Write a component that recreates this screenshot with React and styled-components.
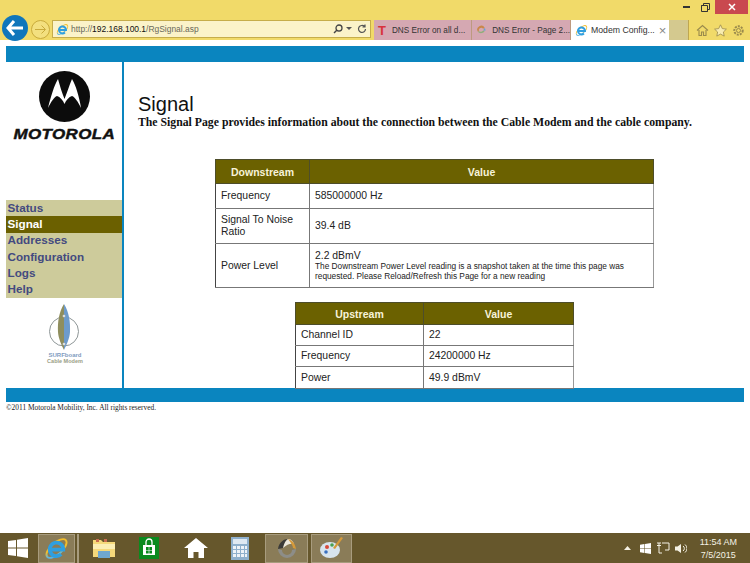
import React from "react";
import styled, { createGlobalStyle } from "styled-components";

const GlobalStyle = createGlobalStyle`
  html, body {
    margin: 0;
    padding: 0;
    background: #fff;
    font-family: "Liberation Sans", Arial, sans-serif;
  }
`;

const Screen = styled.div`
  width: 750px;
  height: 563px;
  display: flex;
  flex-direction: column;
  overflow: hidden;
  position: relative;
`;

/* browser chrome */
const Chrome = styled.div`
  height: 40px;
  flex: none;
  background: #f1da69;
  display: flex;
  flex-direction: column;
`;

const TitleRow = styled.div`
  height: 15px;
  flex: none;
  display: flex;
  justify-content: flex-end;
  align-items: flex-start;
  padding-right: 2px;
`;

const WinButton = styled.div`
  width: ${(p) => p.$w}px;
  height: 14px;
  display: flex;
  align-items: center;
  justify-content: center;
  background: ${(p) => (p.$close ? "#c9494f" : "transparent")};
`;

const NavRow = styled.div`
  height: 25px;
  flex: none;
  display: flex;
  align-items: flex-end;
  position: relative;
`;

const BackButton = styled.div`
  position: absolute;
  left: 2px;
  top: 0;
  width: 26px;
  height: 26px;
  border-radius: 50%;
  background: #0f76bb;
  display: flex;
  align-items: center;
  justify-content: center;
  z-index: 2;
`;

const ForwardButton = styled.div`
  position: absolute;
  left: 31px;
  top: 5px;
  width: 17px;
  height: 17px;
  border-radius: 50%;
  border: 1px solid #c9ab3c;
  background: #f3e07f;
  display: flex;
  align-items: center;
  justify-content: center;
`;

const AddressBar = styled.div`
  margin-left: 52px;
  margin-bottom: 2px;
  width: 319px;
  height: 18px;
  box-sizing: border-box;
  background: #fbf3c9;
  border: 1px solid #c6ad4a;
  display: flex;
  align-items: center;
  padding: 0 3px 0 3px;
  gap: 4px;
  font-size: 8.45px;
  color: #6a6a5a;
`;

const Url = styled.span`
  flex: 1;
  margin-left: -2px;
  white-space: nowrap;
  b {
    font-weight: normal;
    color: #111;
  }
`;

const Tabs = styled.div`
  margin-left: 3px;
  height: 20px;
  display: flex;
  align-items: stretch;
`;

const Tab = styled.div`
  width: ${(p) => p.$w}px;
  box-sizing: border-box;
  background: ${(p) => (p.$active ? "#fff" : "#d5a8b2")};
  border-right: 1px solid ${(p) => (p.$active ? "#fff" : "#bd9a80")};
  display: flex;
  align-items: center;
  gap: ${(p) => p.$gap}px;
  padding-left: ${(p) => p.$pad}px;
  font-size: ${(p) => (p.$active ? 8.7 : 8.2)}px;
  color: #333;
  white-space: nowrap;
`;

const TabClose = styled.span`
  margin-left: 1px;
  color: #888;
  font-size: 13px;
  line-height: 13px;
`;

const NewTab = styled.div`
  width: 19px;
  background: #d4c98f;
  border-right: 1px solid #bfa750;
`;

const ChromeTools = styled.div`
  display: flex;
  gap: 5px;
  align-items: center;
  height: 20px;
  margin-left: 7px;
`;

/* page */
const Page = styled.div`
  flex: 1;
  min-height: 0;
  padding: 6px 6px 0;
  background: #fff;
`;

const BlueBar = styled.div`
  height: ${(p) => p.$h}px;
  background: #0a85bf;
`;

const Layout = styled.div`
  height: 326px;
  display: flex;
`;

const Sidebar = styled.div`
  width: 116px;
  flex: none;
  border-right: 2px solid #0a85bf;
  display: flex;
  flex-direction: column;
`;

const LogoBlock = styled.div`
  height: 138px;
  flex: none;
  display: flex;
  flex-direction: column;
  align-items: center;
  padding-top: 9px;
  box-sizing: border-box;
`;

const WordMark = styled.div`
  margin-top: 6px;
  font-size: 13.8px;
  line-height: 13px;
  font-weight: bold;
  font-style: italic;
  letter-spacing: 0.3px;
  color: #111;
  -webkit-text-stroke: 0.4px #111;
  transform: scaleX(1.23);
`;

const Menu = styled.div`
  background: #cdcb9b;
  display: flex;
  flex-direction: column;
  height: 98px;
  flex: none;
`;

const MenuItem = styled.div`
  flex: 1;
  display: flex;
  align-items: center;
  padding: 0 0 2px 1.5px;
  font-size: 11.7px;
  font-weight: bold;
  color: ${(p) => (p.$active ? "#fff" : "#434a80")};
  background: ${(p) => (p.$active ? "#6b6000" : "transparent")};
`;

const SurfLogo = styled.div`
  margin-top: 5px;
  display: flex;
  justify-content: center;
`;

const Content = styled.div`
  flex: 1;
  min-width: 0;
  display: flex;
  flex-direction: column;
  align-items: flex-start;
`;

const Heading = styled.div`
  margin: 31px 0 0 14px;
  font-size: 20px;
  line-height: 23px;
  color: #111;
`;

const Lead = styled.div`
  margin: 0 0 0 14px;
  font-family: "Liberation Serif", "Times New Roman", serif;
  font-size: 11.76px;
  line-height: 14px;
  font-weight: bold;
  color: #111;
  white-space: nowrap;
`;

const DataTable = styled.table`
  border-collapse: collapse;
  table-layout: fixed;
  width: ${(p) => p.$w}px;
  margin-left: ${(p) => p.$left}px;
  margin-top: ${(p) => p.$top}px;
  font-size: 10.4px;
  color: #222;
  background: #fff;

  th {
    background: #6b6100;
    color: #f7f3d8;
    font-weight: bold;
    font-size: 10.5px;
    text-align: center;
    border: 1px solid #4d4d2a;
    padding: 0;
  }

  td {
    border: 1px solid #777;
    border-left-color: #444;
    padding: 0 5px;
    line-height: 12px;
  }

  td:last-child {
    border-right-color: #999;
  }
`;

const Note = styled.div`
  font-size: 8.3px;
  line-height: 10px;
`;

const PowerValue = styled.div`
  font-size: 10.4px;
  line-height: 11px;
`;

const Copyright = styled.div`
  margin-top: 1px;
  font-family: "Liberation Serif", "Times New Roman", serif;
  font-size: 7.4px;
  line-height: 9px;
  color: #222;
`;

/* taskbar */
const Taskbar = styled.div`
  height: 30px;
  flex: none;
  background: #66572c;
  display: flex;
  align-items: center;
  color: #fff;
`;

const TaskSlot = styled.div`
  width: ${(p) => p.$w}px;
  margin-left: ${(p) => p.$ml || 0}px;
  height: 29px;
  box-sizing: border-box;
  display: flex;
  align-items: center;
  justify-content: center;
  background: ${(p) => (p.$on ? "#8a7c58" : "transparent")};
  border: 1px solid ${(p) => (p.$on ? "#a89c7e" : "transparent")};
`;

const TaskSeparator = styled.div`
  width: 2px;
  height: 29px;
  margin-left: 2px;
  background: #a89c7e;
`;

const Tray = styled.div`
  margin-left: auto;
  display: flex;
  align-items: center;
  gap: 6px;
  padding-right: 13px;
`;

const Clock = styled.div`
  margin-left: 7px;
  padding-top: 2px;
  text-align: center;
  font-size: 9px;
  line-height: 13px;
  color: #f4f1e4;
`;

const IeIcon = ({ size = 14 }) => (
  <svg width={size} height={size} viewBox="0 0 24 24">
    <defs>
      <linearGradient id="ieRing" x1="1" y1="0" x2="0" y2="1">
        <stop offset="0" stopColor="#f2bd2c" />
        <stop offset="0.55" stopColor="#f2bd2c" />
        <stop offset="0.8" stopColor="#58b6e6" />
        <stop offset="1" stopColor="#58b6e6" />
      </linearGradient>
    </defs>
    <ellipse cx="12" cy="12" rx="12" ry="5.500" transform="rotate(-42 12 12)" fill="none" stroke="url(#ieRing)" strokeWidth="1.800" />
    <path d="M6 13h12.500A6.500 6.500 0 1 0 16.500 17.500" fill="none" stroke="#2f9fe0" strokeWidth="3.600" />
  </svg>
);

const MotorolaMark = () => (
  <svg width="51" height="51" viewBox="0 0 51 51">
    <circle cx="25.500" cy="25.500" r="25.500" fill="#0c0c0c" />
    <path d="M9 37C12 25 15 15 19 8c2 7 4 14 6.500 20C28 22 30 15 33 8c4 7 7 17 9 29-3-6-6-11-9-12-3 1-6 4-7.500 8C24 29 21 26 18 25c-3 1-6 6-9 12z" fill="#fff" />
  </svg>
);

const SurfboardMark = () => (
  <svg width="60" height="62" viewBox="0 0 60 62">
    <circle cx="30" cy="28.500" r="14.500" fill="none" stroke="#8e9697" strokeWidth="1" />
    <path d="M30 1C25 9 23.500 19 24 29c.3 6 3.500 13 6 18z" fill="#8f8e5e" />
    <path d="M30 1c5 8 6.500 18 6 28-.3 6-3.500 13-6 18z" fill="#6d9bcc" />
    <circle cx="30" cy="13" r="1.300" fill="#fff" stroke="#8e9697" strokeWidth=".5" />
    <circle cx="30" cy="41" r="1.300" fill="#fff" stroke="#8e9697" strokeWidth=".5" />
    <text x="31" y="54" fontSize="6" textAnchor="middle" fill="#7f9cc0" fontWeight="bold" fontFamily="Liberation Sans">SURFboard</text>
    <text x="31" y="60" fontSize="5.500" textAnchor="middle" fill="#9a9e86" fontWeight="bold" fontFamily="Liberation Sans">Cable Modem</text>
  </svg>
);

const WinLogo = ({ size = 20, color = "#fff" }) => (
  <svg width={size} height={size} viewBox="0 0 20 20">
    <path d="M0 3l8-1.100V9.500H0zM9 1.700L20 0v9.500H9zM0 10.500h8v7.600L0 17zM9 10.500h11V20L9 18.300z" fill={color} />
  </svg>
);

const downstream = [
  { label: "Frequency", value: "585000000 Hz", h: 25 },
  { label: "Signal To Noise Ratio", value: "39.4 dB", h: 35 },
];

const upstream = [
  { label: "Channel ID", value: "22", h: 21 },
  { label: "Frequency", value: "24200000 Hz", h: 21 },
  { label: "Power", value: "49.9 dBmV", h: 22 },
];

const menu = ["Status", "Signal", "Addresses", "Configuration", "Logs", "Help"];

export default function App() {
  return (
    <Screen>
      <GlobalStyle />
      <Chrome>
        <TitleRow>
          <WinButton $w={18}>
            <svg width="7" height="2"><rect width="7" height="2" fill="#333" /></svg>
          </WinButton>
          <WinButton $w={20}>
            <svg width="9" height="9" viewBox="0 0 9 9">
              <path d="M2.500.5h6v6h-2v2h-6v-6h2zM.5 2.500h6v6" fill="none" stroke="#333" />
            </svg>
          </WinButton>
          <WinButton $w={33} $close>
            <svg width="8" height="8" viewBox="0 0 8 8">
              <path d="M1 1l6 6M7 1L1 7" stroke="#fff" strokeWidth="1.500" />
            </svg>
          </WinButton>
        </TitleRow>
        <NavRow>
          <BackButton>
            <svg width="18" height="16" viewBox="0 0 18 16">
              <path d="M8 1L2 8l6 7M2 8h15" fill="none" stroke="#fff" strokeWidth="3" />
            </svg>
          </BackButton>
          <ForwardButton>
            <svg width="11" height="9" viewBox="0 0 11 9">
              <path d="M6.500.5l4 4-4 4M10 4.500H0" fill="none" stroke="#c9ab3c" />
            </svg>
          </ForwardButton>
          <AddressBar>
            <IeIcon size={13} />
            <Url>
              http://<b>192.168.100.1</b>/RgSignal.asp
            </Url>
            <svg width="10" height="10" viewBox="0 0 10 10" style={{ marginRight: -1 }}>
              <circle cx="6" cy="4" r="3" fill="none" stroke="#444" strokeWidth="1.300" />
              <path d="M4 6L1 9" stroke="#444" strokeWidth="1.500" />
            </svg>
            <svg width="6" height="4"><path d="M0 0h6L3 3z" fill="#555" /></svg>
            <svg width="10" height="10" viewBox="0 0 10 10" style={{ marginLeft: 1 }}>
              <path d="M8.500 5a3.500 3.500 0 1 1-1-2.500M8 .5V3H5.500" fill="none" stroke="#555" strokeWidth="1.200" />
            </svg>
          </AddressBar>
          <Tabs>
            <Tab $w={98} $pad={4} $gap={6}>
              <span style={{ color: "#d8323c", fontWeight: "bold", fontSize: 13 }}>T</span>
              DNS Error on all d...
            </Tab>
            <Tab $w={99} $pad={5} $gap={6}>
              <svg width="12" height="12" viewBox="0 0 12 12">
                <path d="M1 8a5 5 0 0 1 9-5l-2 1.500A3 3 0 0 0 3 8z" fill="#c9874a" />
                <path d="M10 3a5 5 0 0 1 1 4L8 6.500z" fill="#6aa0d0" />
                <path d="M1 8c2 3 6 3 9 0L8 6.500C7 8 5 8.500 3 8z" fill="#8fae7a" />
              </svg>
              DNS Error - Page 2...
            </Tab>
            <Tab $w={98} $pad={4} $gap={3} $active>
              <IeIcon size={13} />
              Modem Config...
              <TabClose>×</TabClose>
            </Tab>
            <NewTab />
          </Tabs>
          <ChromeTools>
            <svg width="13" height="13" viewBox="0 0 13 13">
              <path d="M1 6.500L6.500 1.500 12 6.500M3 6v5.500h2.500V8h2v3.500H10V6" fill="none" stroke="#9a8a4c" strokeWidth="1.100" />
            </svg>
            <svg width="13" height="13" viewBox="0 0 13 13">
              <path d="M6.500.8l1.800 3.800 4.100.5-3 2.900.8 4.100-3.700-2-3.700 2 .8-4.100-3-2.900 4.100-.5z" fill="#f8ecb0" stroke="#9a8a4c" strokeWidth=".8" />
            </svg>
            <svg width="13" height="13" viewBox="0 0 13 13">
              <circle cx="6.500" cy="6.500" r="4.200" fill="none" stroke="#9a8a4c" strokeWidth="2" strokeDasharray="2 1.100" />
              <circle cx="6.500" cy="6.500" r="2" fill="none" stroke="#9a8a4c" />
            </svg>
          </ChromeTools>
        </NavRow>
      </Chrome>

      <Page>
        <BlueBar $h={16} />
        <Layout>
          <Sidebar>
            <LogoBlock>
              <MotorolaMark />
              <WordMark>MOTOROLA</WordMark>
            </LogoBlock>
            <Menu>
              {menu.map((m) => (
                <MenuItem key={m} $active={m === "Signal"}>
                  {m}
                </MenuItem>
              ))}
            </Menu>
            <SurfLogo>
              <SurfboardMark />
            </SurfLogo>
          </Sidebar>
          <Content>
            <Heading>Signal</Heading>
            <Lead>
              The Signal Page provides information about the connection between the Cable Modem and the cable company.
            </Lead>
            <DataTable $w={439} $left={91} $top={29}>
              <colgroup>
                <col style={{ width: 94 }} />
                <col />
              </colgroup>
              <thead>
                <tr style={{ height: 24 }}>
                  <th>Downstream</th>
                  <th>Value</th>
                </tr>
              </thead>
              <tbody>
                {downstream.map((r) => (
                  <tr key={r.label} style={{ height: r.h }}>
                    <td>{r.label}</td>
                    <td>{r.value}</td>
                  </tr>
                ))}
                <tr style={{ height: 44 }}>
                  <td>Power Level</td>
                  <td>
                    <PowerValue>2.2 dBmV</PowerValue>
                    <Note>
                      The Downstream Power Level reading is a snapshot taken at the time this page was requested.
                      Please Reload/Refresh this Page for a new reading
                    </Note>
                  </td>
                </tr>
              </tbody>
            </DataTable>
            <DataTable $w={279} $left={171} $top={14}>
              <colgroup>
                <col style={{ width: 128 }} />
                <col />
              </colgroup>
              <thead>
                <tr style={{ height: 22 }}>
                  <th>Upstream</th>
                  <th>Value</th>
                </tr>
              </thead>
              <tbody>
                {upstream.map((r) => (
                  <tr key={r.label} style={{ height: r.h }}>
                    <td>{r.label}</td>
                    <td>{r.value}</td>
                  </tr>
                ))}
              </tbody>
            </DataTable>
          </Content>
        </Layout>
        <BlueBar $h={14} />
        <Copyright>©2011 Motorola Mobility, Inc. All rights reserved.</Copyright>
      </Page>

      <Taskbar>
        <TaskSlot $w={36}><WinLogo size={20} /></TaskSlot>
        <TaskSlot $w={37} $ml={2} $on><IeIcon size={25} /></TaskSlot>
        <TaskSeparator />
        <TaskSlot $w={40} $ml={5}>
          <svg width="24" height="22" viewBox="0 0 24 22">
            <path d="M1 3h8l2 2h12v15H1z" fill="#f5d97a" />
            <path d="M1 7h22v5H1z" fill="#fbeeb4" />
            <path d="M6 14h12v7H6z" fill="#6fa8d0" />
            <path d="M4 2h3v3H4zM12 2h3v3h-3z" fill="#c96c50" />
          </svg>
        </TaskSlot>
        <TaskSlot $w={40} $ml={5}>
          <svg width="20" height="22" viewBox="0 0 20 22">
            <rect width="20" height="22" fill="#0a8a1e" />
            <path d="M4 8h12v10H4z" fill="#fff" />
            <path d="M7 8V5a3 3 0 0 1 6 0v3" fill="none" stroke="#fff" strokeWidth="1.300" />
            <path d="M7 10h2.700v3H7zM10.300 10H13v3h-2.700zM7 13.600h2.700v3H7zM10.300 13.600H13v3h-2.700z" fill="#0a8a1e" />
          </svg>
        </TaskSlot>
        <TaskSlot $w={40} $ml={7}>
          <svg width="24" height="20" viewBox="0 0 24 20">
            <path d="M12 0L0 10h4v10h5.500v-6h5v6H20V10h4z" fill="#fff" />
          </svg>
        </TaskSlot>
        <TaskSlot $w={40} $ml={4}>
          <svg width="18" height="23" viewBox="0 0 18 23">
            <rect width="18" height="23" fill="#8fb0cc" />
            <rect x="2" y="2" width="14" height="5" fill="#dfe9f2" />
            <path d="M2 9h3v3H2zM6 9h3v3H6zM10 9h3v3h-3zM14 9h2v3h-2zM2 13h3v3H2zM6 13h3v3H6zM10 13h3v3h-3zM14 13h2v3h-2zM2 17h3v3H2zM6 17h3v3H6zM10 17h3v3h-3zM14 17h2v3h-2z" fill="#eef3f8" />
          </svg>
        </TaskSlot>
        <TaskSlot $w={43} $ml={5} $on>
          <svg width="22" height="22" viewBox="0 0 22 22">
            <path d="M2 12a9 9 0 0 0 18 0l-4 1a5 5 0 0 1-10 0z" fill="#8d8d88" />
            <path d="M2 12C3 5 8 2 12 2c-2 2-4 5-5 9z" fill="#3a3a38" />
            <path d="M7 11c1-5 3-8 5-9 3 0 5 2 6 5-3-1-7 0-11 4z" fill="#ecE8dc" />
            <path d="M12 2c4 1 7 4 8 10l-3-1c0-2-2-5-5-9z" fill="#d69a3a" />
          </svg>
        </TaskSlot>
        <TaskSlot $w={41} $ml={3} $on>
          <svg width="24" height="24" viewBox="0 0 24 24">
            <ellipse cx="10" cy="14" rx="10" ry="8" fill="#d8e4ee" />
            <circle cx="7" cy="11" r="2" fill="#d84a3a" />
            <circle cx="12" cy="9" r="1.800" fill="#4aa050" />
            <circle cx="6" cy="16" r="1.800" fill="#3a70c0" />
            <path d="M21 1l2 1-8 11-2-1z" fill="#d69a3a" />
          </svg>
        </TaskSlot>
        <Tray>
          <svg width="7" height="4" style={{ marginRight: 3 }}><path d="M0 4l3.500-4L7 4z" fill="#f4f1e4" /></svg>
          <WinLogo size={11} />
          <svg width="13" height="12" viewBox="0 0 13 12">
            <path d="M5 1h7v7H8M2 1v10M0 1h4M0 3.500h4M2 11h3" fill="none" stroke="#f4f1e4" />
          </svg>
          <svg width="12" height="11" viewBox="0 0 12 11" style={{ marginLeft: -1.500 }}>
            <path d="M0 3.500h2.500L6 1v9L2.500 7.500H0z" fill="#f4f1e4" />
            <path d="M8 3a3 3 0 0 1 0 5M10 1.500a5 5 0 0 1 0 8" fill="none" stroke="#f4f1e4" />
          </svg>
          <Clock>
            11:54 AM
            <br />
            7/5/2015
          </Clock>
        </Tray>
      </Taskbar>
    </Screen>
  );
}
